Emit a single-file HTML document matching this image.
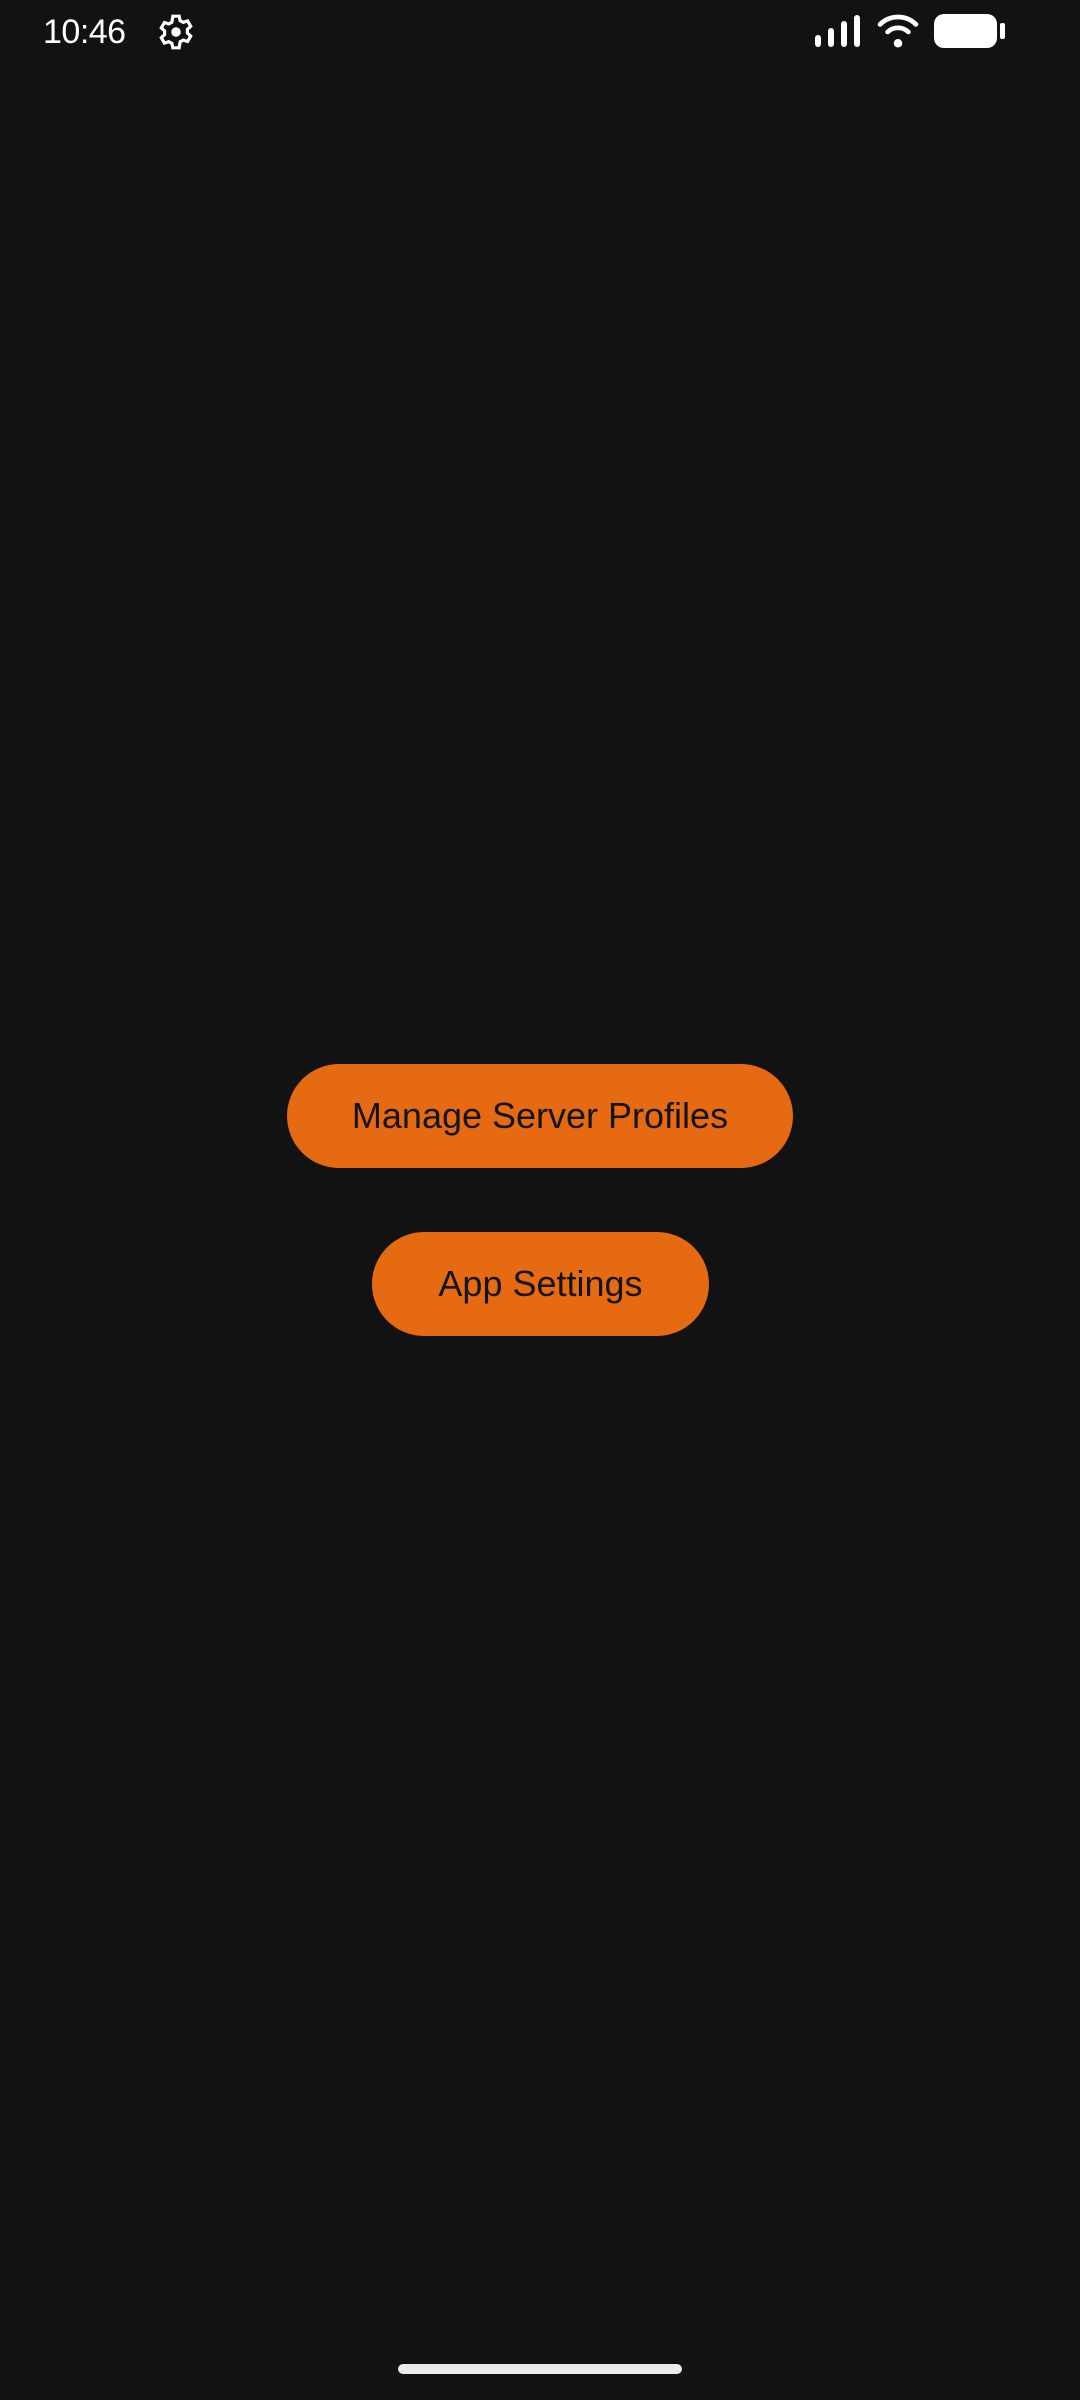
<!DOCTYPE html>
<html><head><meta charset="utf-8"><style>
html,body{margin:0;padding:0;background:#121212;width:1080px;height:2400px;overflow:hidden;font-family:"Liberation Sans",sans-serif}
.btn{position:absolute;background:#E56A12;color:#141414;border-radius:53px;display:flex;align-items:center;justify-content:center;font-size:36px;height:104px}
.time{position:absolute;left:43px;top:13px;color:#fff;font-size:34px;letter-spacing:-0.5px}
</style></head><body>
<div class="time">10:46</div>
<svg style="position:absolute;left:157px;top:13px" width="38" height="38" viewBox="0 0 24 24"><path fill="none" stroke="#fff" stroke-width="2" d="M10 2h4l.6 2.8 2 1.1 2.7-.9 2 3.4-2.1 1.9v2.4l2.1 1.9-2 3.4-2.7-.9-2 1.1L14 22h-4l-.6-2.8-2-1.1-2.7.9-2-3.4 2.1-1.9v-2.4L2.7 9.4l2-3.4 2.7.9 2-1.1z"/><circle cx="12" cy="12" r="3" fill="#fff"/></svg>
<svg style="position:absolute;left:815px;top:15px" width="46" height="32" viewBox="0 0 46 32"><rect x="0" y="20" width="6" height="12" rx="3" fill="#fff"/><rect x="13" y="13" width="6" height="19" rx="3" fill="#fff"/><rect x="26" y="6" width="6" height="26" rx="3" fill="#fff"/><rect x="39" y="0" width="6" height="32" rx="3" fill="#fff"/></svg>
<svg style="position:absolute;left:876px;top:14px" width="44" height="34" viewBox="0 0 46 36"><path d="M4 11 A27 27 0 0 1 42 11" fill="none" stroke="#fff" stroke-width="5" stroke-linecap="round"/><path d="M12 19 A16 16 0 0 1 34 19" fill="none" stroke="#fff" stroke-width="5" stroke-linecap="round"/><circle cx="23" cy="31" r="4.5" fill="#fff"/></svg>
<div style="position:absolute;left:934px;top:14px;width:63px;height:34px;background:#fff;border-radius:10px"></div>
<div style="position:absolute;left:1000px;top:23px;width:5px;height:16px;background:#fff;border-radius:2px"></div>
<div class="btn" style="left:287px;top:1064px;width:506px">Manage Server Profiles</div>
<div class="btn" style="left:372px;top:1232px;width:337px">App Settings</div>
<div style="position:absolute;left:398px;top:2364px;width:284px;height:10px;background:#ebebeb;border-radius:5px"></div>
</body></html>
